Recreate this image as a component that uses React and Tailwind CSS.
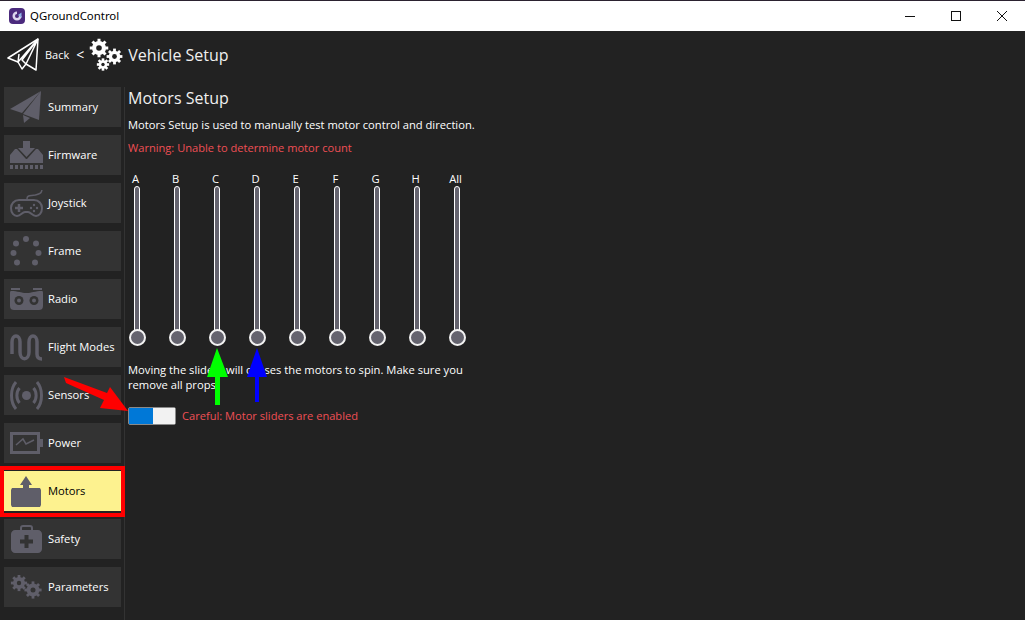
import React from 'react';

const ICON = '#5f5e69';

function PlaneIcon() {
  return (
    <svg width="32" height="32" viewBox="0 0 32 32" fill={ICON}>
      <path d="M31 0 L0 18 L12 22 Z" />
      <path d="M31 0 L13 23 L29 29 Z" />
      <path d="M13 24 L14 32 L20 27 Z" />
    </svg>
  );
}

function FirmwareIcon() {
  return (
    <svg width="33" height="28" viewBox="0 0 33 28" fill={ICON}>
      <path d="M13 0 H20 V7 H25 L16.500 16 L8 7 H13 Z" />
      <path d="M5 8 H7 L16 18 H17 L26 8 H28 L33 14 V22 H0 V14 Z" />
      {[0, 5, 10, 15, 20, 25, 30].map((x) => (
        <rect key={x} x={x} y="24" width="3" height="4" />
      ))}
    </svg>
  );
}

function JoystickIcon() {
  return (
    <svg width="33" height="27" viewBox="0 0 33 27" fill="none" stroke={ICON}>
      <path d="M17 9 C17 5 20 6 25 5 C29 4 31 4 32 0" strokeWidth="1.500" />
      <path d="M9 10 H24 C29 10 32 14 32 18 C32 23 29 26 26 26 C22 26 21 22 18 22 H15 C12 22 11 26 7 26 C4 26 1 23 1 18 C1 14 4 10 9 10 Z" strokeWidth="2" />
      <path d="M9 14 V22 M5 18 H13" strokeWidth="2.500" />
      <circle cx="24" cy="15" r="1.200" fill={ICON} stroke="none" />
      <circle cx="24" cy="21" r="1.200" fill={ICON} stroke="none" />
      <circle cx="21" cy="18" r="1.200" fill={ICON} stroke="none" />
      <circle cx="27" cy="18" r="1.200" fill={ICON} stroke="none" />
    </svg>
  );
}

function FrameIcon() {
  return (
    <svg width="32" height="30" viewBox="0 0 32 30" fill={ICON}>
      {[[16, 3], [6, 7.500], [26, 7.500], [3.500, 17], [28.500, 17], [7, 26.500], [25, 26.500]].map(([x, y]) => (
        <circle key={`${x}-${y}`} cx={x} cy={y} r="3" />
      ))}
    </svg>
  );
}

function RadioIcon() {
  return (
    <svg width="33" height="22" viewBox="0 0 33 22" fill={ICON}>
      <rect x="1" y="0" width="9" height="2" />
      <rect x="23" y="0" width="9" height="2" />
      <path d="M1 3 C8 3 11 5 16.500 5 C22 5 25 3 32 3 C33 3 33 4 33 6 V18 C33 21 31 22 29 22 H4 C2 22 0 21 0 18 V6 C0 4 0 3 1 3 Z" />
      <circle cx="9" cy="12.500" r="4.500" fill="#333333" />
      <circle cx="9" cy="12.500" r="2" />
      <circle cx="24" cy="12.500" r="4.500" fill="#333333" />
      <circle cx="24" cy="12.500" r="2" />
    </svg>
  );
}

function ModesIcon() {
  return (
    <svg width="33" height="27" viewBox="0 0 33 27" fill="none" stroke={ICON} strokeWidth="3.500">
      <path d="M2 20 V8 C2 0 10 0 10 8 V18 C10 27 19 27 19 18 V8 C19 0 27 0 27 8 V20 C27 24 29 25 32 25" />
    </svg>
  );
}

function SensorsIcon() {
  return (
    <svg width="33" height="29" viewBox="0 0 33 29" fill="none" stroke={ICON} strokeWidth="3">
      <circle cx="16.500" cy="14.500" r="4.500" fill={ICON} stroke="none" />
      <path d="M9.500 7 C6 11 6 18 9.500 22" />
      <path d="M23.500 7 C27 11 27 18 23.500 22" />
      <path d="M6 1 C0 8 0 21 6 28" />
      <path d="M27 1 C33 8 33 21 27 28" />
    </svg>
  );
}

function PowerIcon() {
  return (
    <svg width="33" height="22" viewBox="0 0 33 22" fill="none" stroke={ICON}>
      <rect x="1.500" y="1.500" width="27" height="19" strokeWidth="3" />
      <rect x="30" y="7" width="3" height="8" fill={ICON} stroke="none" />
      <path d="M6 13 L13 7 L16 12 L24 8" strokeWidth="1.500" />
    </svg>
  );
}

function MotorsIcon() {
  return (
    <svg width="30" height="31" viewBox="0 0 30 31" fill={ICON}>
      <path d="M15 0 L21 9 H18 V12 H12 V9 H9 Z" />
      <path d="M1 12 H29 L30 14 V29 L29 31 H1 L0 29 V14 Z" />
    </svg>
  );
}

function SafetyIcon() {
  return (
    <svg width="31" height="28" viewBox="0 0 31 28" fill={ICON}>
      <path fillRule="evenodd" d="M9 5 V3 C9 1 10 0 12 0 H19 C21 0 22 1 22 3 V5 H27 C29 5 31 7 31 9 V24 C31 26 29 28 27 28 H4 C2 28 0 26 0 24 V9 C0 7 2 5 4 5 Z M11 5 H20 V3 C20 2.500 19.500 2 19 2 H12 C11.500 2 11 2.500 11 3 Z M13.500 10 V14.500 H9 V18.500 H13.500 V23 H17.500 V18.500 H22 V14.500 H17.500 V10 Z" />
    </svg>
  );
}

function Gear({ cx, cy, r, hole, fill, teeth = 8, tooth }) {
  return (
    <g fill={fill}>
      <circle cx={cx} cy={cy} r={r} />
      {Array.from({ length: teeth }).map((_, i) => (
        <rect
          key={i}
          x={cx - tooth / 2}
          y={cy - r - tooth * 0.75}
          width={tooth}
          height={tooth * 1.2}
          transform={`rotate(${(360 / teeth) * i} ${cx} ${cy})`}
        />
      ))}
      <circle cx={cx} cy={cy} r={hole} fill={fill === ICON ? '#333333' : '#222222'} />
    </g>
  );
}

function ParamsIcon() {
  return (
    <svg width="32" height="24" viewBox="0 0 32 24">
      <Gear cx={9} cy={8} r={6} hole={2.2} fill={ICON} tooth={2.800} />
      <Gear cx={23} cy={15} r={6.500} hole={2.500} fill={ICON} tooth={2.800} />
    </svg>
  );
}

const items = [
  ['Summary', PlaneIcon],
  ['Firmware', FirmwareIcon],
  ['Joystick', JoystickIcon],
  ['Frame', FrameIcon],
  ['Radio', RadioIcon],
  ['Flight Modes', ModesIcon],
  ['Sensors', SensorsIcon],
  ['Power', PowerIcon],
  ['Motors', MotorsIcon],
  ['Safety', SafetyIcon],
  ['Parameters', ParamsIcon],
];

const motors = ['A', 'B', 'C', 'D', 'E', 'F', 'G', 'H', 'All'];

function MotorSlider({ label }) {
  return (
    <div className="flex w-10 flex-col items-center">
      <div className="mr-[3px] h-4 text-center text-[11.2px] leading-4 text-white">{label}</div>
      <div className="-mt-px mr-px h-[146px] w-[6px] rounded-t-[3px] border border-white bg-[#64636e]" />
      <div className="-mt-[3px] h-[17px] w-[17px] rounded-full border-2 border-[#f2f2f2] bg-[#64636e]" />
    </div>
  );
}

export default function App() {
  return (
    <div className="relative flex h-[620px] w-[1025px] flex-col overflow-hidden bg-[#222222] font-['Open_Sans',sans-serif] text-white">
      {/* window title bar */}
      <div className="flex h-[31px] shrink-0 items-center border-t border-[#2b2230] bg-white text-black">
        <svg width="16" height="16" viewBox="0 0 16 16" className="ml-[9px]">
          <rect width="16" height="16" rx="4" fill="#4b2a7d" />
          <path d="M8 3.500 A4.500 4.500 0 1 0 12.500 8 L10 8 A2 2 0 1 1 8 6 Z" fill="#dcd6ee" />
          <path d="M9 7 L12.500 4.500 L12.500 10 Z" fill="#8fb4e8" />
        </svg>
        <span className="ml-[5px] font-['Noto_Sans',sans-serif] text-[11.4px]">QGroundControl</span>
        <div className="ml-auto flex items-center">
          <svg width="12" height="12" viewBox="0 0 12 12" className="mr-[34px]" stroke="#111" fill="none">
            <path d="M1 6.500 H11" />
          </svg>
          <svg width="12" height="12" viewBox="0 0 12 12" className="mr-[34px]" stroke="#111" fill="none">
            <rect x="1.500" y="1.500" width="9" height="9" />
          </svg>
          <svg width="12" height="12" viewBox="0 0 12 12" className="mr-[17px]" stroke="#111" fill="none">
            <path d="M1 1 L11 11 M11 1 L1 11" />
          </svg>
        </div>
      </div>

      {/* breadcrumb */}
      <div className="flex h-[50px] shrink-0 items-center pb-[3px] pl-[7px]">
        <svg width="33" height="33" viewBox="0 0 33 33" fill="none" stroke="#ffffff" strokeWidth="1.500" strokeLinejoin="round">
          <path d="M31 1 L1 20 L11 24 L15 31 L19 26 L29 32 Z" />
          <path d="M31 1 L11 24 L12 16 M31 1 L19 26 L15 22 L31 1" />
        </svg>
        <span className="ml-[5px] mt-[2px] text-[11px]">Back</span>
        <span className="ml-[7px] text-[14px]">&lt;</span>
        <svg width="34" height="34" viewBox="0 0 34 34" className="ml-[5px]">
          <Gear cx={10} cy={10} r={7} hole={2.800} fill="#ffffff" tooth={3} />
          <Gear cx={25.500} cy={18.500} r={5.800} hole={2.400} fill="#ffffff" tooth={2.800} />
          <Gear cx={14} cy={26.500} r={4.200} hole={1.700} fill="#ffffff" tooth={2.600} />
        </svg>
        <span className="ml-[5px] text-[16px] text-[#f0f0f0]">Vehicle Setup</span>
      </div>

      <div className="flex min-h-0 flex-1 pt-[6px]">
        {/* setup sidebar */}
        <div className="flex w-[125px] shrink-0 flex-col gap-2 border-r border-[#333333] pl-1 pr-[3px]">
          {items.map(([name, Icon]) => {
            const active = name === 'Motors';
            return (
              <div
                key={name}
                className={`flex h-10 w-[117px] shrink-0 items-center ${active ? 'bg-[#fdf28f] text-black' : 'bg-[#333333] text-white'}`}
              >
                <div className="flex w-11 shrink-0 items-center justify-center">
                  <Icon />
                </div>
                <span className="whitespace-nowrap text-[11.2px]">{name}</span>
              </div>
            );
          })}
        </div>

        {/* motors panel */}
        <div className="pl-[3px]">
          <h1 className="text-[16px] leading-[22px] text-[#f0f0f0]">Motors Setup</h1>
          <p className="mt-2 text-[11.2px] leading-4">Motors Setup is used to manually test motor control and direction.</p>
          <p className="mt-[7px] text-[11.1px] leading-4 text-[#ef4f55]">Warning: Unable to determine motor count</p>
          <div className="-ml-[11px] mt-[15px] flex">
            {motors.map((m) => (
              <MotorSlider key={m} label={m} />
            ))}
          </div>
          <p className="mt-4 w-[340px] text-[11.2px] leading-[15px]">
            Moving the sliders will causes the motors to spin. Make sure you remove all props.
          </p>
          <div className="mt-[15px] flex items-center">
            <div className="flex h-[18px] w-[48px] rounded-[2px] border border-[#8a8a8a]">
              <div className="w-[24px] bg-[#0078d7]" />
              <div className="flex-1 bg-[#f2f2f2]" />
            </div>
            <span className="ml-[6px] text-[11.1px] text-[#ef4f55]">Careful: Motor sliders are enabled</span>
          </div>
        </div>
      </div>

      {/* annotations on top of the screenshot */}
      <div className="absolute left-0 top-[466px] h-[51px] w-[125px] border-4 border-[#ff0000]" />
      <svg className="absolute left-0 top-0" width="300" height="430" viewBox="0 0 300 430">
        <path d="M64 377 L66 383 L104 400 L100 408 L128 411 L110 387 L107 393 Z" fill="#ff0000" />
        <path d="M217 348 L228 377 H220 V405 H215 V377 H207 Z" fill="#00ff00" />
        <path d="M257 348 L267 377 H259 V402 H255 V377 H247 Z" fill="#0000ff" />
      </svg>
    </div>
  );
}
